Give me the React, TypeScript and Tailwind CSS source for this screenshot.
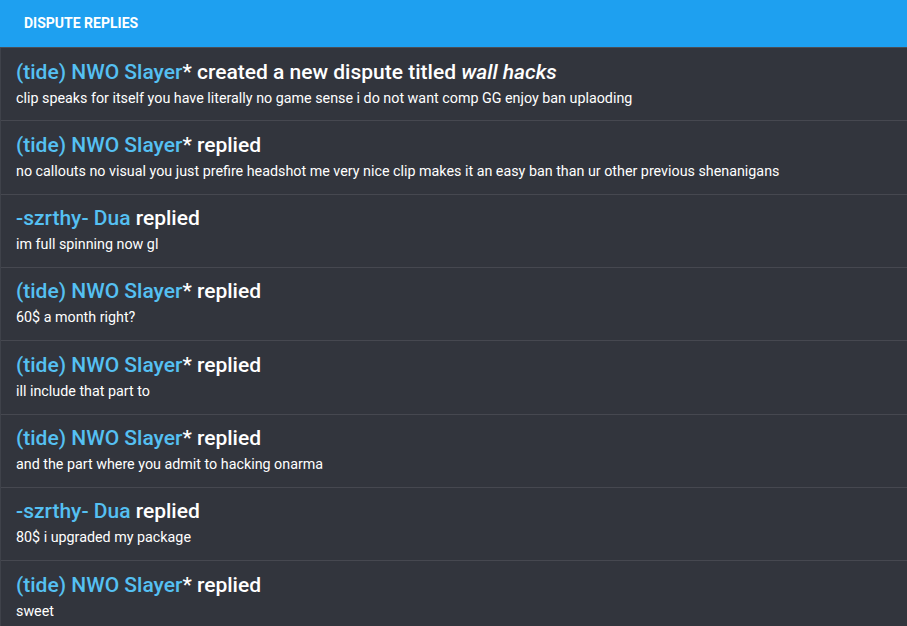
import React from "react";

type Entry = { user: string; star?: boolean; action: string; title?: string; body: string };

const entries: Entry[] = [
  { user: "(tide) NWO Slayer", star: true, action: "created a new dispute titled", title: "wall hacks", body: "clip speaks for itself you have literally no game sense i do not want comp GG enjoy ban uplaoding" },
  { user: "(tide) NWO Slayer", star: true, action: "replied", body: "no callouts no visual you just prefire headshot me very nice clip makes it an easy ban than ur other previous shenanigans" },
  { user: "-szrthy- Dua", action: "replied", body: "im full spinning now gl" },
  { user: "(tide) NWO Slayer", star: true, action: "replied", body: "60$ a month right?" },
  { user: "(tide) NWO Slayer", star: true, action: "replied", body: "ill include that part to" },
  { user: "(tide) NWO Slayer", star: true, action: "replied", body: "and the part where you admit to hacking onarma" },
  { user: "-szrthy- Dua", action: "replied", body: "80$ i upgraded my package" },
  { user: "(tide) NWO Slayer", star: true, action: "replied", body: "sweet" },
];

export default function App() {
  return (
    <div className="h-[626px] overflow-hidden bg-[#32353d] font-['Roboto',sans-serif]">
      <div className="h-[48px] bg-[#1ea0f0] px-6 flex items-center border-b border-[#4a4d55]">
        <span className="text-[14px] font-bold text-white">DISPUTE REPLIES</span>
      </div>
      <div className="border-l border-[#3f424a]">
        {entries.map((e, i) => (
          <div key={i} className="pl-[15px] pr-4 pt-[10.5px] pb-[12.83px] border-b border-[#464850]">
            <div className="text-[21px] leading-[26px] font-medium text-white">
              <span className="text-[#55c0f2]">{e.user}</span>
              {e.star ? "*" : ""} {e.action}
              {e.title && <em className="italic"> {e.title}</em>}
            </div>
            <div className="text-[14.3px] leading-[20px] text-white mt-[3px]">{e.body}</div>
          </div>
        ))}
      </div>
    </div>
  );
}
